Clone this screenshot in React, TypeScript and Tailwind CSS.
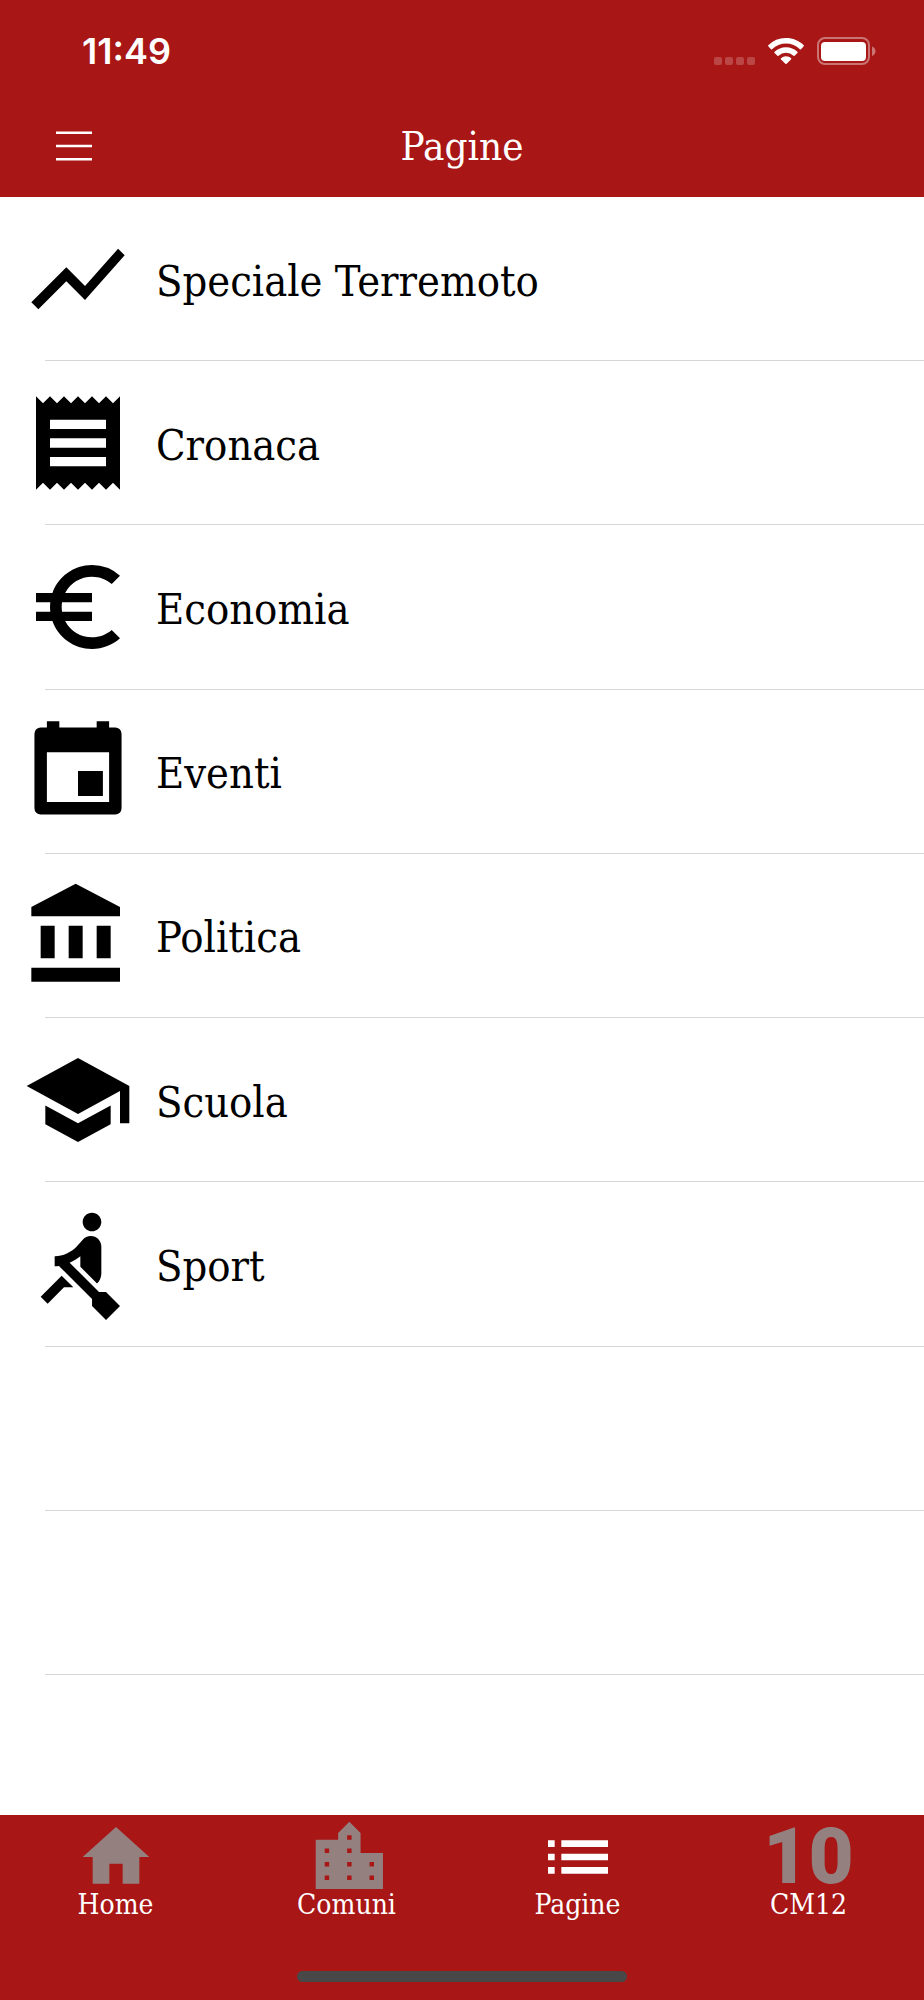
import type { ReactNode } from "react";
import {
  MdEuroSymbol,
  MdHome,
  MdList,
  MdReceipt,
  MdRowing,
  MdSchool,
  MdShowChart,
} from "react-icons/md";

function CalendarIcon() {
  return (
    <svg viewBox="0 0 18 18" className="size-28" fill="currentColor" aria-hidden="true">
      <path
        fillRule="evenodd"
        d="M4 1h2v1h6V1h2v1h1a1 1 0 0 1 1 1v12a1 1 0 0 1-1 1H3a1 1 0 0 1-1-1V3a1 1 0 0 1 1-1h1zM4 6v8h10V6zM9 9h4v4H9z"
      />
    </svg>
  );
}

function BankIcon() {
  return (
    <svg viewBox="0 0 24 24" className="size-28" fill="currentColor" aria-hidden="true">
      <path d="M4 10v7h3v-7zM10 10v7h3v-7zM16 10v7h3v-7zM2 22h19v-3H2zM11.5 1 2 6v2h19V6z" />
    </svg>
  );
}

function CityIcon() {
  return (
    <svg viewBox="-1.95 -1.05 17.85 17.85" className="size-20" fill="currentColor" aria-hidden="true">
      <path
        fillRule="evenodd"
        d="M0 4h5V2.5L7.5 0 10 2.5V7h5v8H0zM7 3v1h1V3zM2 6v1h1V6zM7 6v1h1V6zM2 9v1h1V9zM7 9v1h1V9zM12 9v1h1V9zM2 12v1h1v-1zM7 12v1h1v-1zM12 12v1h1v-1z"
      />
    </svg>
  );
}

function WifiIcon() {
  return (
    <svg viewBox="0 0 36 26" className="h-[26px] w-9" fill="currentColor" aria-hidden="true">
      <path d="M18 0C24.9 0 31.2 2.7 35.7 7.2a.8.8 0 0 1 0 1.1L33 11.2a.8.8 0 0 1-1.1 0A20 20 0 0 0 4.1 11.2a.8.8 0 0 1-1.1 0L.3 8.3a.8.8 0 0 1 0-1.1A25 25 0 0 1 18 0z" />
      <path d="M18 9.2a16.5 16.5 0 0 1 11.4 4.6.8.8 0 0 1 0 1.2l-2.8 2.8a.8.8 0 0 1-1.1 0 11 11 0 0 0-15 0 .8.8 0 0 1-1.1 0l-2.800-2.800a.8.8 0 0 1 0-1.200A16.500 16.500 0 0 1 18 9.200z" />
      <path d="M18 18.300c1.900 0 3.700.7 5 1.900a.8.8 0 0 1 0 1.200l-4.400 4.400a.8.8 0 0 1-1.200 0L13 21.400a.8.8 0 0 1 0-1.200 7.500 7.500 0 0 1 5-1.900z" />
    </svg>
  );
}

function BatteryIcon() {
  return (
    <svg viewBox="0 0 59 28" className="h-7 w-[59px]" aria-hidden="true">
      <rect x="1" y="1" width="51" height="26" rx="7" fill="none" stroke="#cb7474" strokeWidth="2" />
      <rect x="4" y="5" width="45" height="19" rx="4" fill="#fff" />
      <path d="M55 9.500c2.200.8 3.500 2.600 3.500 4.700S57.200 18.100 55 18.900z" fill="#cb7474" />
    </svg>
  );
}

function MenuIcon() {
  return (
    <svg viewBox="0 0 36 30" className="h-[30px] w-9" fill="currentColor" aria-hidden="true">
      <path d="M0 .5h36V3H0zM0 13.700h36v2.500H0zM0 27h36v2.500H0z" />
    </svg>
  );
}

const pages: { label: string; icon: ReactNode }[] = [
  { label: "Speciale Terremoto", icon: <MdShowChart className="size-28" /> },
  { label: "Cronaca", icon: <MdReceipt className="size-28" /> },
  { label: "Economia", icon: <MdEuroSymbol className="size-28" /> },
  { label: "Eventi", icon: <CalendarIcon /> },
  { label: "Politica", icon: <BankIcon /> },
  { label: "Scuola", icon: <MdSchool className="size-28" /> },
  { label: "Sport", icon: <MdRowing className="size-28" /> },
];

const tabs: { label: string; icon: ReactNode; active?: boolean }[] = [
  { label: "Home", icon: <MdHome className="size-20" /> },
  { label: "Comuni", icon: <CityIcon /> },
  { label: "Pagine", icon: <MdList className="size-20" />, active: true },
  {
    label: "CM12",
    icon: <span className="font-['Roboto',sans-serif] text-[78px] leading-16 font-black">10</span>,
  },
];

export default function App() {
  return (
    <div className="flex min-h-screen flex-col bg-white font-['Roboto_Slab','DejaVu_Serif_Condensed','DejaVu_Serif',serif] text-black">
      <header className="bg-[#a81616] text-white">
        <div className="flex h-[101px] items-center justify-between pr-12 pl-[82px]">
          <time className="font-['Inter',sans-serif] text-[36px] leading-10 font-semibold">11:49</time>
          <div className="flex items-center gap-[13px]">
            <div className="flex gap-[3px] self-end" aria-hidden="true">
              <span className="size-2 rounded-xs bg-[#bb4646]" />
              <span className="size-2 rounded-xs bg-[#bb4646]" />
              <span className="size-2 rounded-xs bg-[#bb4646]" />
              <span className="size-2 rounded-xs bg-[#bb4646]" />
            </div>
            <WifiIcon />
            <BatteryIcon />
          </div>
        </div>
        <div className="grid h-24 grid-cols-[1fr_auto_1fr] items-center px-14 pb-1.5">
          <button type="button" aria-label="Menu" className="w-9">
            <MenuIcon />
          </button>
          <h1 className="text-[40px] leading-12">Pagine</h1>
        </div>
      </header>

      <main className="flex-1">
        <ul className="grid min-h-[1478px] auto-rows-fr">
          {pages.map((page) => (
            <li key={page.label} className="flex flex-col">
              <a href="#" className="flex flex-1 items-center gap-[22px] pl-[22px]">
                {page.icon}
                <span className="pt-1 text-[43px] leading-14">{page.label}</span>
              </a>
              <div className="ml-[45px] h-px bg-[#d6d6d9]" />
            </li>
          ))}
          <li className="ml-[45px] border-b border-[#d6d6d9]" />
          <li className="ml-[45px] border-b border-[#d6d6d9]" />
        </ul>
      </main>

      <footer className="bg-[#a81616] pb-[18px]">
        <nav className="grid grid-cols-4">
          {tabs.map((tab) => (
            <a
              key={tab.label}
              href="#"
              aria-current={tab.active ? "page" : undefined}
              className="flex flex-col items-center pt-0.5 text-white"
            >
              <span
                className={
                  tab.active
                    ? "flex h-20 items-center justify-center text-white"
                    : "flex h-20 items-center justify-center text-[#958080]"
                }
              >
                {tab.icon}
              </span>
              <span className="-mt-2 text-[28px] leading-8">{tab.label}</span>
            </a>
          ))}
        </nav>
        <div className="mx-auto mt-[50px] h-[11px] w-[330px] rounded-full bg-[#484848]" />
      </footer>
    </div>
  );
}
